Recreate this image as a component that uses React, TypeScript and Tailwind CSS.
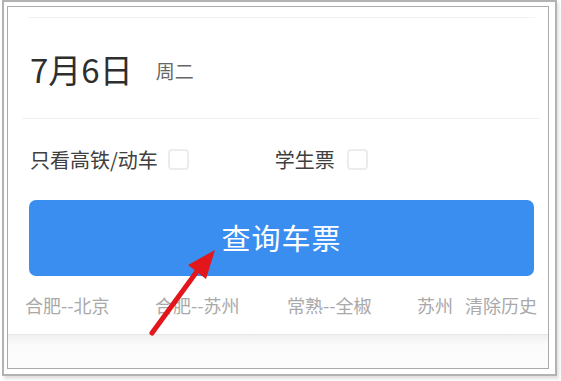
const cjk = { fontFamily: '"Noto Sans CJK SC", "Noto Sans", sans-serif' };

function Checkbox() {
  return <span className="block h-[21px] w-[21px] rounded-[4px] border-2 border-[#ececec] bg-white" />;
}

const history = [
  { label: "合肥--北京", w: "w-[130px]" },
  { label: "合肥--苏州", w: "w-[132px]" },
  { label: "常熟--全椒", w: "w-[130px]" },
  { label: "苏州", w: "w-[48px]" },
  { label: "清除历史", w: "w-[80px]" },
];

export default function App() {
  return (
    <div className="relative h-[381px] w-[561px] overflow-hidden bg-white" style={cjk}>
      <div className="ml-[2px] h-[376px] w-[555px] border-2 border-[#b3b3b3] bg-white pl-[3px] pt-[4px] shadow-[2px_3px_3px_rgba(0,0,0,0.12)]">
        <div className="flex h-[363px] w-[542px] flex-col border border-[#ababab] bg-white">
          <div className="ml-[20px] mt-[10px] h-px w-[507px] bg-[#f2f2f2]" />

          <div className="flex h-[100px] items-center pl-[22px] pt-[2px]">
            <span className="text-[33px] leading-none text-[#2e2e2e]">7月6日</span>
            <span className="ml-[23px] mt-[2px] text-[19px] leading-none text-[#666]">周二</span>
          </div>

          <div className="ml-[14px] h-px w-[518px] bg-[#f0f0f0]" />

          <div className="flex h-[81px] items-center pl-[22px] text-[20px] leading-none text-[#404040]">
            <span>只看高铁/动车</span>
            <span className="ml-[10px]">
              <Checkbox />
            </span>
            <span className="ml-[86px]">学生票</span>
            <span className="ml-[12px]">
              <Checkbox />
            </span>
          </div>

          <div className="ml-[21px] flex h-[76px] w-[505px] items-center justify-center rounded-[7px] bg-[#3a8ef0] text-[29px] tracking-[1px] text-white">
            查询车票
          </div>

          <div className="flex h-[58px] items-center pl-[17px] text-[18px] text-[#a9a9a9]">
            {history.map((h) => (
              <span key={h.label} className={`${h.w} shrink-0 whitespace-nowrap`}>
                {h.label}
              </span>
            ))}
          </div>

          <div className="h-px bg-[#e6e6e6]" />
          <div className="h-[10px] bg-gradient-to-b from-[#f0f0f0] to-[#fbfbfb]" />
          <div className="flex-1 bg-[#fcfcfc]" />
        </div>
      </div>

      <svg className="pointer-events-none absolute left-0 top-0" width="561" height="381">
        <line x1="152" y1="333" x2="198" y2="270" stroke="#e3161c" strokeWidth="5" strokeLinecap="round" />
        <polygon points="215,250 188,265 206,279" fill="#e3161c" />
      </svg>
    </div>
  );
}
